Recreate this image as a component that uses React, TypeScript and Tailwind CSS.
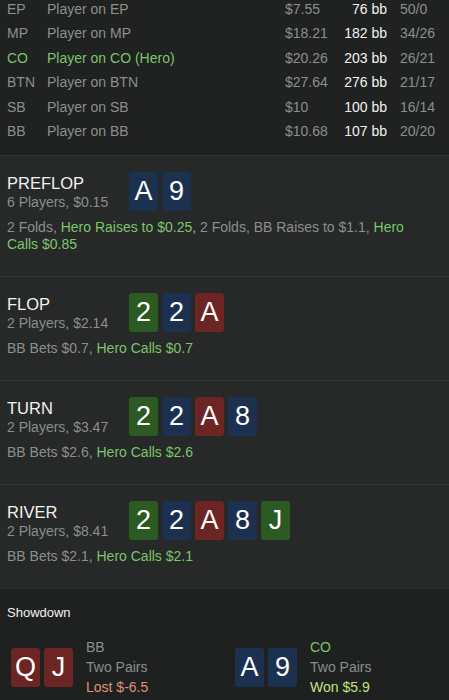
import React from 'react'

type Suit = 'g' | 'b' | 'r'

const suitBg: Record<Suit, string> = {
    g: 'bg-[#2b5a23]',
    b: 'bg-[#1c3150]',
    r: 'bg-[#6d2523]',
}

const players = [
    { pos: 'EP', name: 'Player on EP', money: '$7.55', bb: '76 bb', stats: '50/0' },
    { pos: 'MP', name: 'Player on MP', money: '$18.21', bb: '182 bb', stats: '34/26' },
    { pos: 'CO', name: 'Player on CO (Hero)', money: '$20.26', bb: '203 bb', stats: '26/21', hero: true },
    { pos: 'BTN', name: 'Player on BTN', money: '$27.64', bb: '276 bb', stats: '21/17' },
    { pos: 'SB', name: 'Player on SB', money: '$10', bb: '100 bb', stats: '16/14' },
    { pos: 'BB', name: 'Player on BB', money: '$10.68', bb: '107 bb', stats: '20/20' },
]

type Part = { t: string; hero?: boolean }

// each inner array is one line of the action text
const streets: { name: string; sub: string; cards: [string, Suit][]; lines: Part[][] }[] = [
    {
        name: 'PREFLOP',
        sub: '6 Players, $0.15',
        cards: [['A', 'b'], ['9', 'b']],
        lines: [
            [
                { t: '2 Folds,\u00a0' },
                { t: 'Hero Raises to $0.25,', hero: true },
                { t: '\u00a02 Folds, BB Raises to $1.1,\u00a0' },
                { t: 'Hero', hero: true },
            ],
            [{ t: 'Calls $0.85', hero: true }],
        ],
    },
    {
        name: 'FLOP',
        sub: '2 Players, $2.14',
        cards: [['2', 'g'], ['2', 'b'], ['A', 'r']],
        lines: [[{ t: 'BB Bets $0.7,\u00a0' }, { t: 'Hero Calls $0.7', hero: true }]],
    },
    {
        name: 'TURN',
        sub: '2 Players, $3.47',
        cards: [['2', 'g'], ['2', 'b'], ['A', 'r'], ['8', 'b']],
        lines: [[{ t: 'BB Bets $2.6,\u00a0' }, { t: 'Hero Calls $2.6', hero: true }]],
    },
    {
        name: 'RIVER',
        sub: '2 Players, $8.41',
        cards: [['2', 'g'], ['2', 'b'], ['A', 'r'], ['8', 'b'], ['J', 'g']],
        lines: [[{ t: 'BB Bets $2.1,\u00a0' }, { t: 'Hero Calls $2.1', hero: true }]],
    },
]

function Card({ rank, suit }: { rank: string; suit: Suit }) {
    return (
        <div className={`w-[29px] h-[39px] rounded-[3px] flex items-center justify-center text-white text-[27px] leading-none ${suitBg[suit]}`}>
            {rank}
        </div>
    )
}

export default function App() {
    return (
        <div className="w-[449px] h-[700px] overflow-hidden bg-[#1f2220] text-[14px] text-[#8c8f8d]" style={{ fontFamily: '"Liberation Sans", Arial, sans-serif' }}>
            <div className="mt-[-3px] pb-[11px]">
                {players.map((p) => (
                    <div key={p.pos} className={`flex h-[24.5px] items-center pl-[7px] whitespace-nowrap ${p.hero ? 'text-[#7dc46b]' : ''}`}>
                        <div className="w-[40px] shrink-0">{p.pos}</div>
                        <div className="flex-1 min-w-0">{p.name}</div>
                        <div className="w-[52px] shrink-0 text-[#8c8f8d]">{p.money}</div>
                        <div className="w-[50px] shrink-0 text-right text-[#f2f2f2]">{p.bb}</div>
                        <div className="w-[62px] shrink-0 pl-[13px] text-[#8c8f8d]">{p.stats}</div>
                    </div>
                ))}
            </div>

            {streets.map((s) => (
                <div key={s.name} className="border-t border-[#323532] bg-[#262927] pt-[16px] pb-[23px] pl-[7px] pr-[14px]">
                    <div className="flex items-center">
                        <div className="w-[122px]">
                            <div className="text-[16.5px] leading-[20px] text-[#f2f2f2]">{s.name}</div>
                            <div className="leading-[18px]">{s.sub}</div>
                        </div>
                        <div className="flex gap-[4px]">
                            {s.cards.map(([r, su], i) => (
                                <Card key={i} rank={r} suit={su} />
                            ))}
                        </div>
                    </div>
                    <div className="mt-[8px] leading-[17px]">
                        {s.lines.map((line, li) => (
                            <div key={li} className="flex whitespace-nowrap">
                                {line.map((a, i) => (
                                    <span key={i} className={a.hero ? 'text-[#7dc46b]' : ''}>{a.t}</span>
                                ))}
                            </div>
                        ))}
                    </div>
                </div>
            ))}

            <div className="border-t border-[#2a2d2b] bg-[#1e211f] px-[7px] pt-[15px]">
                <div className="text-[13px] leading-[18px] text-[#f2f2f2]">Showdown</div>
                <div className="mt-[15px] flex">
                    <div className="flex w-[228px] items-center pl-[4px]">
                        <div className="flex gap-[4px]">
                            <Card rank="Q" suit="r" />
                            <Card rank="J" suit="r" />
                        </div>
                        <div className="ml-[13px] leading-[20px]">
                            <div>BB</div>
                            <div>Two Pairs</div>
                            <div className="text-[#e08f78]">Lost $-6.5</div>
                        </div>
                    </div>
                    <div className="flex items-center">
                        <div className="flex gap-[4px]">
                            <Card rank="A" suit="b" />
                            <Card rank="9" suit="b" />
                        </div>
                        <div className="ml-[13px] leading-[20px]">
                            <div className="text-[#7dc46b]">CO</div>
                            <div>Two Pairs</div>
                            <div className="text-[#c3e27d]">Won $5.9</div>
                        </div>
                    </div>
                </div>
            </div>
        </div>
    )
}
